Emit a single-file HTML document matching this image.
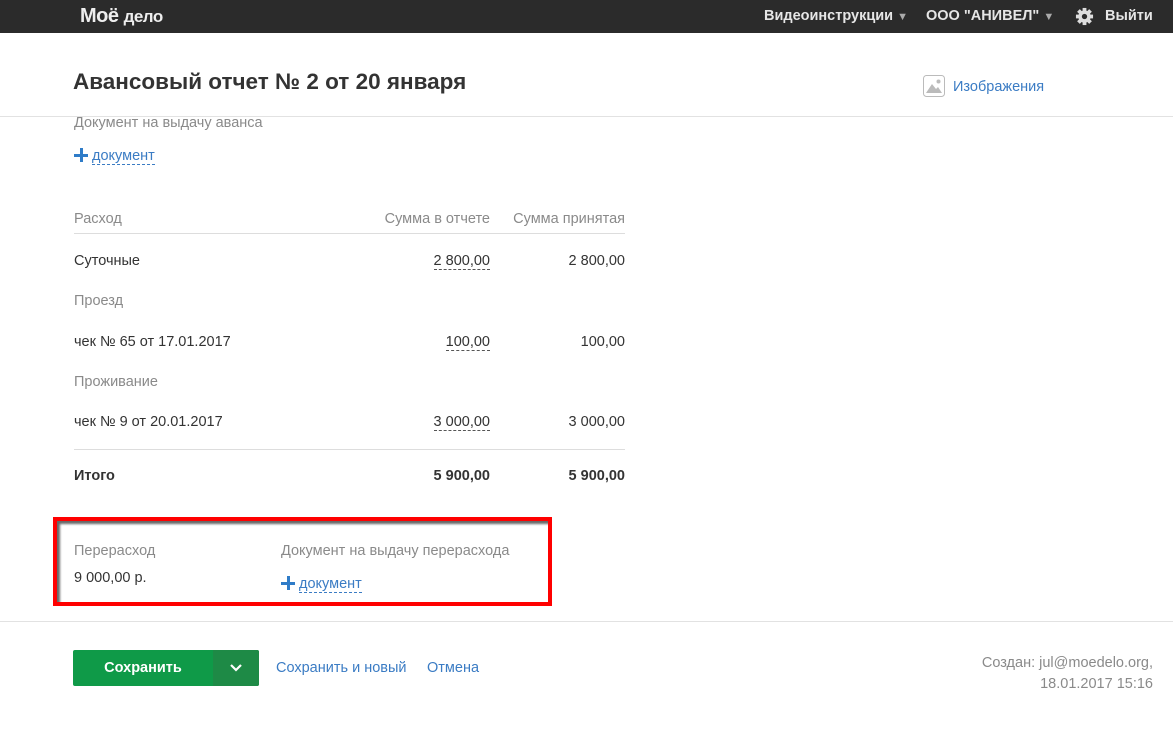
<!DOCTYPE html>
<html><head><meta charset="utf-8"><style>
*{margin:0;padding:0;box-sizing:border-box}
body{width:1173px;height:737px;background:#fff;position:relative;overflow:hidden;font-family:"Liberation Sans",Arial,sans-serif;font-size:14.5px;color:#333}
.a{position:absolute;white-space:nowrap;line-height:16px;margin-top:1px}
.g{color:#8a8a8a}
.l{color:#3b7cc4}
.dash{border-bottom:1px dashed #3b7cc4}
.dk{border-bottom:1px dashed #555}
.r{text-align:right}
.b{font-weight:bold}
.plus{position:absolute;width:14px;height:14px}
.plus:before{content:"";position:absolute;left:0;top:5.5px;width:14px;height:3px;background:#2f7cc8}
.plus:after{content:"";position:absolute;left:5.5px;top:0;width:3px;height:14px;background:#2f7cc8}
</style></head><body>
<div style="position:absolute;left:0;top:0;width:1173px;height:33px;background:#2b2b2b"></div>
<div class="a b" style="left:80px;top:3px;font-size:20px;line-height:24px;color:#eee;letter-spacing:-0.5px">Моё <span style="font-size:17px">дело</span></div>
<div class="a b" style="left:764px;top:7px;color:#e6e6e6;font-size:14.5px">Видеоинструкции <span style="font-size:11px;color:#aaa">▼</span></div>
<div class="a b" style="left:926px;top:7px;color:#e6e6e6;font-size:14.5px">ООО "АНИВЕЛ" <span style="font-size:11px;color:#aaa">▼</span></div>
<svg style="position:absolute;left:1075px;top:7px" width="19" height="19" viewBox="0 0 20 20"><g fill="#ddd"><circle cx="10" cy="10" r="6.5"/><rect x="8" y="1" width="4" height="18"/><rect x="1" y="8" width="18" height="4"/><rect x="8" y="1" width="4" height="18" transform="rotate(45 10 10)"/><rect x="8" y="1" width="4" height="18" transform="rotate(-45 10 10)"/></g><circle cx="10" cy="10" r="2.8" fill="#2b2b2b"/></svg>
<div class="a b" style="left:1105px;top:7px;color:#e6e6e6">Выйти</div>

<div class="a b" style="left:73px;top:68px;font-size:22.5px;line-height:26px;color:#333">Авансовый отчет № 2 от 20 января</div>
<svg style="position:absolute;left:923px;top:75px" width="22" height="22" viewBox="0 0 22 22"><rect x="0.5" y="0.5" width="21" height="21" rx="3" fill="#fff" stroke="#bbb"/><path d="M3 18 L9 9 L13 14 L15 12 L19 18Z" fill="#bbb"/><circle cx="15.5" cy="6.5" r="2" fill="#bbb"/></svg>
<div class="a l" style="left:953px;top:78px">Изображения</div>
<div style="position:absolute;left:0;top:116px;width:1173px;height:1px;background:#e2e2e2"></div>

<div class="a g" style="left:74px;top:114px">Документ на выдачу аванса</div>
<div class="plus" style="left:74px;top:148px"></div>
<div class="a l" style="left:92px;top:147px"><span class="dash">документ</span></div>

<div class="a g" style="left:74px;top:210px">Расход</div>
<div class="a g r" style="left:350px;top:210px;width:140px">Сумма в отчете</div>
<div class="a g r" style="left:485px;top:210px;width:140px">Сумма принятая</div>
<div style="position:absolute;left:74px;top:233px;width:551px;height:1px;background:#ddd"></div>

<div class="a" style="left:74px;top:252px">Суточные</div>
<div class="a r" style="left:360px;top:252px;width:130px"><span class="dk">2 800,00</span></div>
<div class="a r" style="left:495px;top:252px;width:130px">2 800,00</div>
<div class="a g" style="left:74px;top:292px">Проезд</div>
<div class="a" style="left:74px;top:333px">чек № 65 от 17.01.2017</div>
<div class="a r" style="left:360px;top:333px;width:130px"><span class="dk">100,00</span></div>
<div class="a r" style="left:495px;top:333px;width:130px">100,00</div>
<div class="a g" style="left:74px;top:373px">Проживание</div>
<div class="a" style="left:74px;top:413px">чек № 9 от 20.01.2017</div>
<div class="a r" style="left:360px;top:413px;width:130px"><span class="dk">3 000,00</span></div>
<div class="a r" style="left:495px;top:413px;width:130px">3 000,00</div>
<div style="position:absolute;left:74px;top:449px;width:551px;height:1px;background:#ddd"></div>
<div class="a b" style="left:74px;top:467px">Итого</div>
<div class="a b r" style="left:360px;top:467px;width:130px">5 900,00</div>
<div class="a b r" style="left:495px;top:467px;width:130px">5 900,00</div>

<div style="position:absolute;left:53px;top:517px;width:499px;height:89px;border:4px solid #f00;box-shadow:inset 3px 3px 2px rgba(0,0,0,0.6)"></div>
<div class="a g" style="left:74px;top:542px">Перерасход</div>
<div class="a" style="left:74px;top:569px">9 000,00 р.</div>
<div class="a g" style="left:281px;top:542px">Документ на выдачу перерасхода</div>
<div class="plus" style="left:281px;top:576px"></div>
<div class="a l" style="left:299px;top:575px"><span class="dash">документ</span></div>

<div style="position:absolute;left:0;top:621px;width:1173px;height:1px;background:#e2e2e2"></div>
<div style="position:absolute;left:73px;top:650px;width:186px;height:36px;background:#0f9a48;border-radius:2px"></div>
<div style="position:absolute;left:213px;top:650px;width:46px;height:36px;background:#1e8a46;border-radius:0 2px 2px 0"></div>
<div class="a b" style="left:73px;top:659px;width:140px;text-align:center;color:#fff">Сохранить</div>
<svg style="position:absolute;left:229px;top:663px" width="14" height="10" viewBox="0 0 14 10"><path d="M2 2 L7 7 L12 2" fill="none" stroke="#fff" stroke-width="2.2"/></svg>
<div class="a l" style="left:276px;top:659px">Сохранить и новый</div>
<div class="a l" style="left:427px;top:659px">Отмена</div>
<div class="a g r" style="left:900px;top:652px;width:253px;line-height:21px">Создан: jul@moedelo.org,<br>18.01.2017 15:16</div>
</body></html>
